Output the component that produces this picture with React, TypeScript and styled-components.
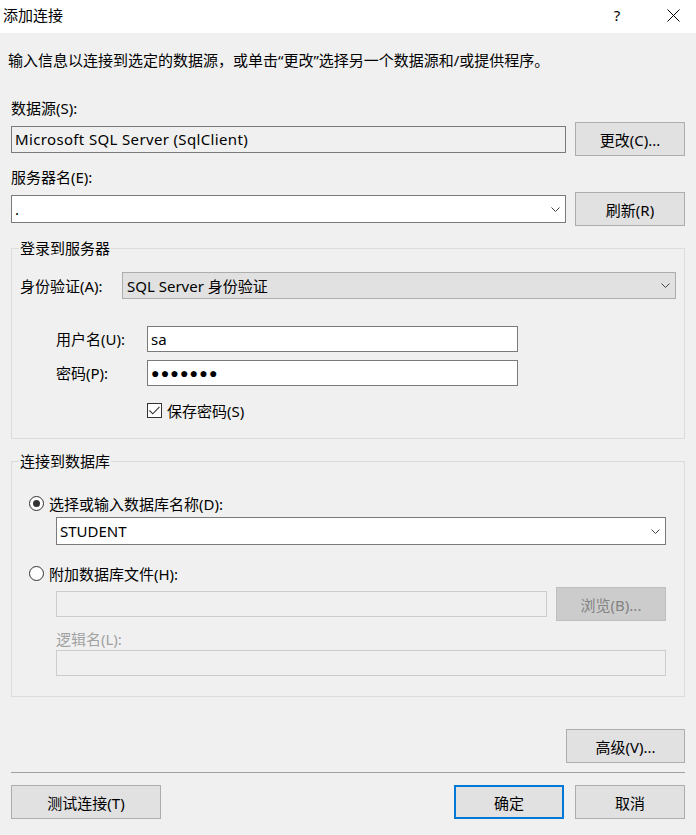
import React from 'react';
import styled, { createGlobalStyle, css } from 'styled-components';

const GlobalStyle = createGlobalStyle`
	html,
	body {
		margin: 0;
		padding: 0;
	}
	body {
		background: #f0f0f0;
		font-family: 'Noto Sans', 'Noto Sans CJK SC', sans-serif;
		font-size: 15px;
		color: #000000;
	}
	* {
		box-sizing: border-box;
	}
`;

const Chevron = () => (
	<svg width='9' height='5' viewBox='0 0 9 5'>
		<polyline points='0.5,0.5 4.5,4.5 8.5,0.5' fill='none' stroke='#404040' strokeWidth='1' />
	</svg>
);

const App = () => {
	return (
		<Window>
			<GlobalStyle />
			<TitleBar>
				<Title>添加连接</Title>
				<CaptionButton $gap={10}>?</CaptionButton>
				<CaptionButton>
					<svg width='13' height='13' viewBox='0 0 13 13'>
						<path d='M0.5 0.5 L12.5 12.5 M12.5 0.5 L0.5 12.5' stroke='#000' strokeWidth='1' />
					</svg>
				</CaptionButton>
			</TitleBar>
			<Content>
				<Intro>输入信息以连接到选定的数据源，或单击“更改”选择另一个数据源和/或提供程序。</Intro>

				<FieldLabel $top={28}>数据源(S):</FieldLabel>
				<Row $top={4}>
					<TextBox $readOnly>
						<Wide>Microsoft SQL Server (SqlClient)</Wide>
					</TextBox>
					<Button $width={110}>更改(C)...</Button>
				</Row>

				<FieldLabel $top={11}>服务器名(E):</FieldLabel>
				<Row $top={5}>
					<ComboBox>
						<span>.</span>
						<Chevron />
					</ComboBox>
					<Button $width={110}>刷新(R)</Button>
				</Row>

				<Group $top={12}>
					<Legend>登录到服务器</Legend>
					<LoginBody>
						<AuthRow>
							<AuthLabel>身份验证(A):</AuthLabel>
							<DropList>
								<span>SQL Server 身份验证</span>
								<Chevron />
							</DropList>
						</AuthRow>
						<CredRow $top={27}>
							<CredLabel>用户名(U):</CredLabel>
							<CredInput>sa</CredInput>
						</CredRow>
						<CredRow $top={8}>
							<CredLabel>密码(P):</CredLabel>
							<CredInput>
								<Dots>●●●●●●●</Dots>
							</CredInput>
						</CredRow>
						<CheckRow>
							<CheckBox>
								<svg width='11' height='9' viewBox='0 0 11 9'>
									<polyline points='0.5,4.5 3.8,7.8 10.5,0.8' fill='none' stroke='#333' strokeWidth='1.1' />
								</svg>
							</CheckBox>
							<span>保存密码(S)</span>
						</CheckRow>
					</LoginBody>
				</Group>

				<Group $top={12}>
					<Legend>连接到数据库</Legend>
					<DbBody>
						<RadioRow>
							<Radio $checked />
							<span>选择或输入数据库名称(D):</span>
						</RadioRow>
						<Indent $top={4}>
							<ComboBox $height={28}>
								<span>STUDENT</span>
								<Chevron />
							</ComboBox>
						</Indent>
						<RadioRow $top={18}>
							<Radio />
							<span>附加数据库文件(H):</span>
						</RadioRow>
						<Indent $top={4}>
							<Row $gap={9}>
								<TextBox $disabled $height={26} />
								<Button $width={110} $disabled>
									浏览(B)...
								</Button>
							</Row>
						</Indent>
						<Indent $top={8}>
							<FieldLabel $disabled>逻辑名(L):</FieldLabel>
						</Indent>
						<Indent $top={1}>
							<TextBox $disabled $height={26} />
						</Indent>
					</DbBody>
				</Group>

				<AdvancedRow>
					<Button $width={119}>高级(V)...</Button>
				</AdvancedRow>
				<Separator />
				<Footer>
					<Button $width={150}>测试连接(T)</Button>
					<FooterRight>
						<Button $width={110} $primary>
							确定
						</Button>
						<Button $width={110}>取消</Button>
					</FooterRight>
				</Footer>
			</Content>
		</Window>
	);
};

const Window = styled.div`
	width: 696px;
	height: 835px;
	display: flex;
	flex-direction: column;
	background: #f0f0f0;
	overflow: hidden;
`;
const TitleBar = styled.div`
	height: 33px;
	padding: 0 0 3px 3px;
	display: flex;
	align-items: center;
	background: #ffffff;
`;
const Title = styled.div`
	flex: 1;
	line-height: 20px;
`;
const CaptionButton = styled.div<{ $gap?: number }>`
	width: 46px;
	height: 20px;
	margin-right: ${(p) => p.$gap ?? 0}px;
	display: flex;
	align-items: center;
	justify-content: center;
	line-height: 20px;
`;
const Content = styled.div`
	flex: 1;
	padding: 0 11px;
	display: flex;
	flex-direction: column;
`;
const Intro = styled.div`
	margin: 17px 0 0 -3px;
	line-height: 20px;
	white-space: nowrap;
`;
const FieldLabel = styled.div<{ $top?: number; $disabled?: boolean }>`
	margin-top: ${(p) => p.$top ?? 0}px;
	line-height: 20px;
	color: ${(p) => (p.$disabled ? '#a2a2a2' : '#000000')};
`;
const Row = styled.div<{ $top?: number; $gap?: number }>`
	margin-top: ${(p) => p.$top ?? 0}px;
	display: flex;
	align-items: center;
	gap: ${(p) => p.$gap ?? 9}px;
`;
const Wide = styled.span`
	letter-spacing: 0.35px;
`;
const TextBox = styled.div<{ $readOnly?: boolean; $disabled?: boolean; $height?: number }>`
	flex: 1 1 auto;
	height: ${(p) => p.$height ?? 27}px;
	padding: 0 3px;
	display: flex;
	align-items: center;
	border: 1px solid #7a7a7a;
	background: #ffffff;
	white-space: nowrap;
	${(p) =>
		p.$readOnly &&
		css`
			background: #f0f0f0;
		`}
	${(p) =>
		p.$disabled &&
		css`
			border-color: #cccccc;
			background: #f0f0f0;
		`}
`;
const ComboBox = styled.div<{ $height?: number }>`
	flex: 1 1 auto;
	height: ${(p) => p.$height ?? 28}px;
	padding: 0 5px 0 3px;
	display: flex;
	align-items: center;
	justify-content: space-between;
	border: 1px solid #7a7a7a;
	background: #ffffff;
`;
const Button = styled.button<{ $width: number; $primary?: boolean; $disabled?: boolean }>`
	width: ${(p) => p.$width}px;
	height: 34px;
	padding: 0;
	flex-shrink: 0;
	font: inherit;
	color: #000000;
	background: #e1e1e1;
	border: 1px solid #adadad;
	${(p) =>
		p.$primary &&
		css`
			border: 2px solid #0078d7;
		`}
	${(p) =>
		p.$disabled &&
		css`
			color: #838383;
			background: #cccccc;
			border-color: #bfbfbf;
		`}
`;
const Group = styled.fieldset<{ $top: number }>`
	margin: ${(p) => p.$top}px 0 0;
	padding: 0;
	min-width: 0;
	border: 1px solid #dcdcdc;
`;
const Legend = styled.legend`
	margin-left: 7px;
	padding: 0 1px;
	line-height: 20px;
`;
const LoginBody = styled.div`
	padding: 14px 8px 18px 8px;
`;
const AuthRow = styled.div`
	display: flex;
	align-items: center;
`;
const AuthLabel = styled.div`
	width: 102px;
	line-height: 20px;
`;
const DropList = styled.div`
	flex: 1;
	height: 27px;
	padding: 0 5px 0 4px;
	display: flex;
	align-items: center;
	justify-content: space-between;
	background: #e1e1e1;
	border: 1px solid #adadad;
`;
const CredRow = styled.div<{ $top: number }>`
	margin-top: ${(p) => p.$top}px;
	padding-left: 36px;
	display: flex;
	align-items: center;
`;
const CredLabel = styled.div`
	width: 91px;
	line-height: 20px;
`;
const CredInput = styled.div`
	width: 371px;
	height: 26px;
	padding: 0 3px;
	display: flex;
	align-items: center;
	border: 1px solid #7a7a7a;
	background: #ffffff;
`;
const Dots = styled.span`
	font-family: 'Liberation Sans', sans-serif;
	font-size: 14px;
	letter-spacing: 1.2px;
`;
const CheckRow = styled.div`
	margin-top: 14px;
	padding-left: 127px;
	height: 20px;
	display: flex;
	align-items: center;
	gap: 5px;
`;
const CheckBox = styled.div`
	width: 15px;
	height: 15px;
	display: flex;
	align-items: center;
	justify-content: center;
	border: 1px solid #333333;
	background: #ffffff;
`;
const DbBody = styled.div`
	padding: 22px 18px 20px 17px;
`;
const RadioRow = styled.div<{ $top?: number }>`
	margin-top: ${(p) => p.$top ?? 0}px;
	height: 20px;
	display: flex;
	align-items: center;
	gap: 5px;
`;
const Radio = styled.div<{ $checked?: boolean }>`
	width: 15px;
	height: 15px;
	border-radius: 50%;
	border: 1px solid #333333;
	background: #ffffff;
	display: flex;
	align-items: center;
	justify-content: center;
	&::after {
		content: '';
		width: 7px;
		height: 7px;
		border-radius: 50%;
		background: ${(p) => (p.$checked ? '#333333' : 'transparent')};
	}
`;
const Indent = styled.div<{ $top: number }>`
	margin-top: ${(p) => p.$top}px;
	padding-left: 27px;
`;
const AdvancedRow = styled.div`
	margin-top: 32px;
	display: flex;
	justify-content: flex-end;
`;
const Separator = styled.div`
	margin-top: 9px;
	height: 1px;
	background: #a0a0a0;
`;
const Footer = styled.div`
	margin-top: 12px;
	display: flex;
	justify-content: space-between;
`;
const FooterRight = styled.div`
	display: flex;
	gap: 11px;
`;

export default App;
